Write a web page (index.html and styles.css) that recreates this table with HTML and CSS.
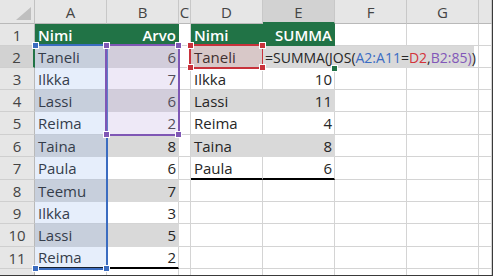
FILE: index.html
```html
<!DOCTYPE html>
<html>
<head>
<meta charset="utf-8">
<link rel="stylesheet" href="styles.css">
</head>
<body>
<div class="frame">
  <div class="grid">
    <div class="corner"><svg width="34" height="23" viewBox="0 0 34 23"><polygon points="31,7 31,20 16,20" fill="#bfbfbf"/></svg></div>
    <div class="ch">A</div><div class="ch">B</div><div class="ch">C</div><div class="ch">D</div><div class="ch sel">E</div><div class="ch">F</div><div class="ch">G</div><div class="ch"></div>

    <div class="rh">1</div>
    <div class="c th">Nimi</div><div class="c th r">Arvo</div><div class="c"></div><div class="c th">Nimi</div><div class="c th r">SUMMA</div><div class="c"></div><div class="c"></div><div class="c"></div>

    <div class="rh sel">2</div>
    <div class="c g">Taneli</div><div class="c g r">6</div><div class="c"></div><div class="c g">Taneli</div><div class="c g"></div><div class="c"></div><div class="c"></div><div class="c"></div>

    <div class="rh">3</div>
    <div class="c w">Ilkka</div><div class="c w r">7</div><div class="c"></div><div class="c w">Ilkka</div><div class="c w r">10</div><div class="c"></div><div class="c"></div><div class="c"></div>

    <div class="rh">4</div>
    <div class="c g">Lassi</div><div class="c g r">6</div><div class="c"></div><div class="c g">Lassi</div><div class="c g r">11</div><div class="c"></div><div class="c"></div><div class="c"></div>

    <div class="rh">5</div>
    <div class="c w">Reima</div><div class="c w r">2</div><div class="c"></div><div class="c w">Reima</div><div class="c w r">4</div><div class="c"></div><div class="c"></div><div class="c"></div>

    <div class="rh">6</div>
    <div class="c g">Taina</div><div class="c g r">8</div><div class="c"></div><div class="c g">Taina</div><div class="c g r">8</div><div class="c"></div><div class="c"></div><div class="c"></div>

    <div class="rh">7</div>
    <div class="c w">Paula</div><div class="c w r">6</div><div class="c"></div><div class="c w tot">Paula</div><div class="c w r tot">6</div><div class="c"></div><div class="c"></div><div class="c"></div>

    <div class="rh">8</div>
    <div class="c g">Teemu</div><div class="c g r">7</div><div class="c"></div><div class="c"></div><div class="c"></div><div class="c"></div><div class="c"></div><div class="c"></div>

    <div class="rh">9</div>
    <div class="c w">Ilkka</div><div class="c w r">3</div><div class="c"></div><div class="c"></div><div class="c"></div><div class="c"></div><div class="c"></div><div class="c"></div>

    <div class="rh">10</div>
    <div class="c g">Lassi</div><div class="c g r">5</div><div class="c"></div><div class="c"></div><div class="c"></div><div class="c"></div><div class="c"></div><div class="c"></div>

    <div class="rh">11</div>
    <div class="c w tot">Reima</div><div class="c w r tot">2</div><div class="c"></div><div class="c"></div><div class="c"></div><div class="c"></div><div class="c"></div><div class="c"></div>

    <div class="rh">12</div>
    <div class="c"></div><div class="c"></div><div class="c"></div><div class="c"></div><div class="c"></div><div class="c"></div><div class="c"></div><div class="c"></div>
  </div>

  <div class="range blue"></div>
  <div class="range purple"></div>
  <div class="range red"></div>

  <div class="editor"><span class="f-dk">=SUMMA(JOS(</span><span class="f-bl">A2:A11</span><span class="f-dk">=</span><span class="f-rd">D2</span><span class="f-dk">,</span><span class="f-pu">B2:85</span><span class="f-pu">)</span><span class="f-dk">)</span><span class="caret"></span></div>

  <div class="handle hb" style="left:32px;top:42px"></div>
  <div class="handle hb" style="left:32px;top:265px"></div>
  <div class="handle hb" style="left:103px;top:265px"></div>
  <div class="handle hp" style="left:103px;top:42px"></div>
  <div class="handle hp" style="left:175px;top:42px"></div>
  <div class="handle hp" style="left:103px;top:131px"></div>
  <div class="handle hp" style="left:175px;top:131px"></div>
  <div class="handle hr" style="left:187px;top:42px"></div>
  <div class="handle hr" style="left:259px;top:42px"></div>
  <div class="handle hr" style="left:187px;top:64px"></div>
  <div class="handle hr" style="left:259px;top:64px"></div>
  <div class="handle hg" style="left:331px;top:65px"></div>
</div>
</body>
</html>
```

FILE: styles.css
```css
html, body {
  margin: 0;
  padding: 0;
  background: #ffffff;
}

.frame {
  position: relative;
  width: 493px;
  height: 276px;
  box-sizing: border-box;
  border-right: 1px solid #3a3a3a;
  border-bottom: 1px solid #3a3a3a;
  overflow: hidden;
  font-family: "Open Sans", "Noto Sans", sans-serif;
  font-size: 15px;
  color: #262626;
}

.grid {
  display: grid;
  grid-template-columns: 35px 72px 72px 12px 72px 72px 72px 72px 13px;
  grid-template-rows: 24px 22px 22px 22px 22px 23px 22px 23px 22px 22px 23px 22px 22px;
}

.grid > div {
  box-sizing: border-box;
  overflow: hidden;
  white-space: nowrap;
}

.corner {
  background: #e6e6e6;
  border-right: 1px solid #c2c2c2;
  border-bottom: 1px solid #b9b9b9;
}

.corner svg {
  display: block;
}

.ch {
  background: #e6e6e6;
  border-right: 1px solid #c8c8c8;
  border-bottom: 1px solid #b9b9b9;
  color: #444;
  display: flex;
  align-items: center;
  justify-content: center;
  padding-top: 1px;
}

.ch.sel {
  background: #d2d2d2;
  border-bottom: 2px solid #217346;
}

.rh {
  background: #e6e6e6;
  border-right: 1px solid #b9b9b9;
  border-bottom: 1px solid #cfcfcf;
  color: #444;
  display: flex;
  align-items: center;
  justify-content: center;
}

.rh.sel {
  background: #d2d2d2;
  border-right: 2px solid #217346;
}

.c {
  border-right: 1px solid #d4d4d4;
  border-bottom: 1px solid #d4d4d4;
  display: flex;
  align-items: center;
  padding: 0 3px;
}

.c.r {
  justify-content: flex-end;
  padding-right: 2px;
}

.c.th {
  background: #217346;
  border-color: #217346;
  color: #ffffff;
  font-weight: 600;
}

.c.g {
  background: #d9d9d9;
  border-color: #d9d9d9;
}

.c.w {
  background: #ffffff;
}

.c.tot {
  border-bottom: 2px solid #000000;
}

.range {
  position: absolute;
  box-sizing: border-box;
  border: 2px solid;
}

.range.blue {
  left: 35px;
  top: 44px;
  width: 73px;
  height: 226px;
  border-left: 0;
  border-color: #3b6cc0;
  background: rgba(120, 165, 235, 0.19);
}

.range.purple {
  left: 105px;
  top: 44px;
  width: 75px;
  height: 92px;
  border-color: #7f57b5;
  background: rgba(195, 175, 225, 0.28);
}

.range.red {
  left: 189px;
  top: 44px;
  width: 75px;
  height: 25px;
  border-color: #c8323b;
  background: rgba(215, 110, 110, 0.15);
}

.editor {
  position: absolute;
  left: 263px;
  top: 46px;
  width: 211px;
  height: 22px;
  box-sizing: border-box;
  background: #d9d9d9;
  padding-left: 2px;
  display: flex;
  align-items: center;
  white-space: nowrap;
  font-size: 14px;
}

.f-dk { color: #262626; }
.f-bl { color: #3a6cc4; }
.f-rd { color: #d3323a; }
.f-pu { color: #8157b8; }

.caret {
  display: inline-block;
  width: 1px;
  height: 17px;
  background: #000;
  margin-left: 2px;
}

.handle {
  position: absolute;
  width: 7px;
  height: 7px;
  box-sizing: border-box;
  border: 1px solid #ffffff;
}

.hb { background: #3b6cc0; }
.hp { background: #7f57b5; }
.hr { background: #c8323b; }
.hg { background: #217346; }
```
